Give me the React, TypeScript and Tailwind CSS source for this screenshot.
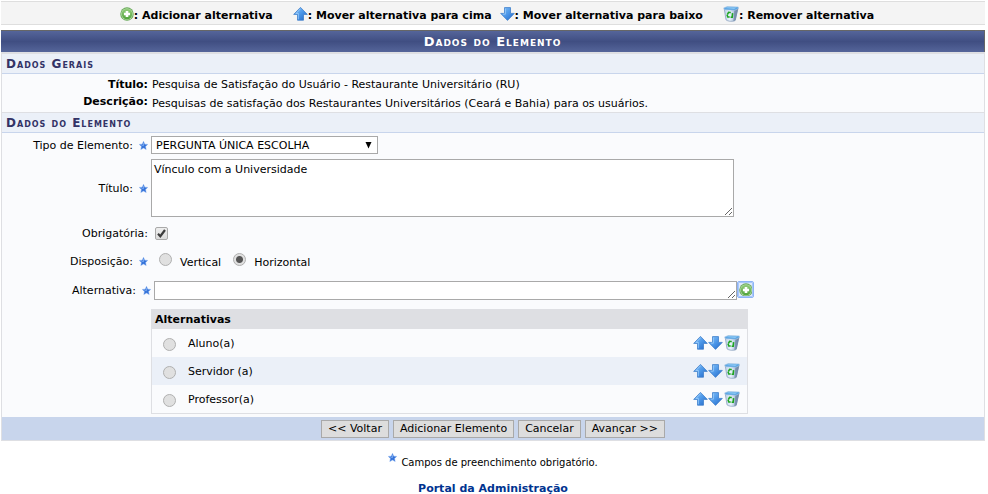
import { useState } from 'react';
import type { ReactNode } from 'react';

const initialAlternatives = ['Aluno(a)', 'Servidor (a)', 'Professor(a)'];

function AddIcon() {
    return (
        <svg width="14" height="14" viewBox="0 0 16 16" aria-hidden="true">
            <defs>
                <linearGradient id="addFill" x1="0" y1="0" x2="0" y2="1">
                    <stop offset="0" stopColor="#93cd7c" />
                    <stop offset="1" stopColor="#52a33c" />
                </linearGradient>
            </defs>
            <circle cx="8" cy="8" r="7.7" fill="#67a957" />
            <circle cx="8" cy="8" r="6.7" fill="#b5dba6" />
            <circle cx="8" cy="8" r="5.9" fill="url(#addFill)" />
            <path d="M6.5 4.5h3v2h2v3h-2v2h-3v-2h-2v-3h2z" fill="#fff" />
        </svg>
    );
}

function ArrowIcon({ down = false }: { down?: boolean }) {
    const fill = down ? 'arrowDown' : 'arrowUp';
    return (
        <svg width="15" height="16" viewBox="0 0 15 16" aria-hidden="true">
            <defs>
                <linearGradient id={fill} x1="0" y1="0" x2="1" y2="1">
                    <stop offset="0" stopColor="#8cc6fa" />
                    <stop offset="0.5" stopColor="#4c97e8" />
                    <stop offset="1" stopColor="#2266c6" />
                </linearGradient>
            </defs>
            <path
                d={
                    down
                        ? 'M4.5 1.6h6v5.8h3.8L7.5 14.4 0.7 7.4h3.8z'
                        : 'M7.5 1.4 14.3 8.4h-3.8v5.8h-6V8.4H0.7z'
                }
                fill={`url(#${fill})`}
                stroke="#3f7fca"
                strokeWidth="0.8"
                strokeLinejoin="round"
            />
            <path
                d={down ? 'M5.4 2.6v5.6H3' : 'M7.5 2.8 3 7.5h2.4v5.8'}
                fill="none"
                stroke="#a3d2fc"
                strokeWidth="0.7"
            />
        </svg>
    );
}

function TrashIcon() {
    return (
        <svg width="16" height="16" viewBox="0 0 16 16" aria-hidden="true">
            <defs>
                <linearGradient id="binBody" x1="0" y1="0" x2="1" y2="0">
                    <stop offset="0" stopColor="#bcd0e8" />
                    <stop offset="0.4" stopColor="#eaf3fd" />
                    <stop offset="0.7" stopColor="#b4c7de" />
                    <stop offset="1" stopColor="#66809f" />
                </linearGradient>
            </defs>
            <path d="M1.2 2.4 3 13.8c1.6 1.6 6.4 2 9 .9L15 2.6z" fill="url(#binBody)" stroke="#8299b8" strokeWidth="0.7" />
            <path d="M11.3 4.5 10.4 15l2.4-1L15 2.8z" fill="#6f87a5" opacity="0.75" />
            <path d="M.7 1.9 4.2.6l11 .3.3 1.5-3.6 1.9-10.4-.5z" fill="#5aa5e4" stroke="#a9c6e2" strokeWidth="0.6" />
            <path d="M2.3 2 4.6 1.2l9 .3-2.4 1.5z" fill="#8cc8f4" />
            <path d="M4.3 8.6 5.6 6.4l2.2.1" fill="none" stroke="#1fa51f" strokeWidth="1.6" />
            <path d="M4 8.8l.8 2.2h1.9" fill="none" stroke="#1fa51f" strokeWidth="1.5" />
            <path d="M7.6 11.2h1.6l.4-4" fill="none" stroke="#1fa51f" strokeWidth="1.6" />
        </svg>
    );
}

function StarIcon() {
    return (
        <svg width="9" height="9" viewBox="0 0 10 10" className="shrink-0" aria-hidden="true">
            <path
                d="M5 .4 6.4 3.5l3.3.3-2.4 2.3.7 3.4L5 7.8 2 9.5l.7-3.4L.3 3.8l3.3-.3z"
                fill="#3573d9"
                stroke="#7eaaf0"
                strokeWidth="0.5"
            />
            <path d="M5 2.2v3L2.4 4.4" fill="none" stroke="#8ab6f8" strokeWidth="0.8" />
        </svg>
    );
}

function LegendItem({ icon, children }: { icon: ReactNode; children: ReactNode }) {
    return (
        <span className="flex items-center">
            {icon}
            <span className="pt-1">: {children}</span>
        </span>
    );
}

function SectionTitle({ children }: { children: ReactNode }) {
    return (
        <h2 className="h-5 border-b border-[#c8d5ec] bg-[#ebf0f8] pl-1 text-[12px] leading-5 font-bold tracking-[1px] text-[#333366] [font-variant:small-caps]">
            {children}
        </h2>
    );
}

function FieldLabel({ id, required = false, children }: { id: string; required?: boolean; children: ReactNode }) {
    return (
        <div className="flex items-center justify-end gap-1.5 pr-[3px]">
            <label htmlFor={id} className="pt-px">{children}</label>
            {required && <StarIcon />}
        </div>
    );
}

const radioClass =
    'size-[13px] shrink-0 appearance-none rounded-full border border-[#b0b0b0] bg-[#e0e0e0] checked:bg-[radial-gradient(circle,#555_3px,#e0e0e0_4px)]';

const buttonClass = 'h-[18px] border border-[#a9a9a9] bg-[#dddddd] px-1.5 leading-4';

export default function App() {
    const [title, setTitle] = useState('Vínculo com a Universidade');
    const [required, setRequired] = useState(true);
    const [layout, setLayout] = useState('horizontal');
    const [alternative, setAlternative] = useState('');
    const [alternatives, setAlternatives] = useState(initialAlternatives);

    const addAlternative = () => {
        if (!alternative.trim()) return;
        setAlternatives([...alternatives, alternative.trim()]);
        setAlternative('');
    };

    const moveAlternative = (from: number, to: number) => {
        if (to < 0 || to >= alternatives.length) return;
        const next = [...alternatives];
        const [item] = next.splice(from, 1);
        next.splice(to, 0, item);
        setAlternatives(next);
    };

    const removeAlternative = (index: number) => {
        setAlternatives(alternatives.filter((_, i) => i !== index));
    };

    return (
        <div className="bg-white pt-px pr-[3px] pb-1 pl-px font-['Verdana','DejaVu_Sans',sans-serif] text-[11px] leading-4 text-black">
            {/* Icon legend */}
            <div className="flex h-6 items-center justify-center border-y border-[#dedede] bg-[#f4f4f4] pt-0.5 pl-2 font-bold">
                <div className="flex gap-5">
                    <LegendItem icon={<AddIcon />}>Adicionar alternativa</LegendItem>
                    <div className="flex gap-2">
                        <LegendItem icon={<ArrowIcon />}>Mover alternativa para cima</LegendItem>
                        <LegendItem icon={<ArrowIcon down />}>Mover alternativa para baixo</LegendItem>
                    </div>
                    <LegendItem icon={<TrashIcon />}>Remover alternativa</LegendItem>
                </div>
            </div>

            <form className="mt-[5px]" onSubmit={(e) => e.preventDefault()}>
                <h1 className="h-[22px] border-t border-r border-[#666666] bg-linear-to-b from-[#55659a] via-[#404e82] to-[#55659a] text-center text-[13px] leading-[22px] font-bold tracking-[1px] text-white [font-variant:small-caps]">
                    Dados do Elemento
                </h1>

                <div className="border-x border-t-2 border-b border-[#dedfe3] bg-[#fafbfd]">
                    {/* General data */}
                    <SectionTitle>Dados Gerais</SectionTitle>
                    <dl className="grid grid-cols-[146px_1fr] gap-x-1 gap-y-px border-b border-[#dedfe3] pt-[3px]">
                        <dt className="text-right font-bold">Título:</dt>
                        <dd>Pesquisa de Satisfação do Usuário - Restaurante Universitário (RU)</dd>
                        <dt className="text-right font-bold">Descrição:</dt>
                        <dd className="pt-0.5">Pesquisas de satisfação dos Restaurantes Universitários (Ceará e Bahia) para os usuários.</dd>
                    </dl>

                    {/* Element data */}
                    <SectionTitle>Dados do Elemento</SectionTitle>
                    <div className="py-[3px]">
                        <div className="grid grid-cols-[149px_1fr]">
                            <FieldLabel id="tipo" required>Tipo de Elemento:</FieldLabel>
                            <div className="grid w-[227px]">
                                <select id="tipo" className="col-start-1 row-start-1 h-[18px] appearance-none border border-[#a9a9a9] bg-white pt-px pl-1 leading-4">
                                    <option>PERGUNTA ÚNICA ESCOLHA</option>
                                </select>
                                <svg width="7" height="7" viewBox="0 0 7 7" className="pointer-events-none col-start-1 row-start-1 mr-1.5 self-center justify-self-end" aria-hidden="true">
                                    <path d="M.5 0h6L3.5 6.5z" fill="#000" />
                                </svg>
                            </div>
                        </div>

                        <div className="mt-[5px] grid grid-cols-[149px_1fr]">
                            <FieldLabel id="titulo" required>Título:</FieldLabel>
                            <textarea
                                id="titulo"
                                value={title}
                                onChange={(e) => setTitle(e.target.value)}
                                className="h-[58px] w-[583px] max-w-full resize border border-[#a9a9a9] bg-white px-0.5 py-0.5"
                            />
                        </div>

                        <div className="mt-1.5 grid h-5 grid-cols-[149px_1fr] items-center">
                            <FieldLabel id="obrigatoria">Obrigatória:</FieldLabel>
                            <div className="ml-1 grid w-[13px]">
                                <input
                                    id="obrigatoria"
                                    type="checkbox"
                                    checked={required}
                                    onChange={(e) => setRequired(e.target.checked)}
                                    className="col-start-1 row-start-1 size-[13px] appearance-none rounded-xs border border-[#a9a9a9] bg-linear-to-b from-[#eeeeee] to-[#dcdcdc]"
                                />
                                {required && (
                                    <svg width="13" height="13" viewBox="0 0 13 13" className="pointer-events-none col-start-1 row-start-1" aria-hidden="true">
                                        <path d="M3 6.8 5.3 9.2 10 3" fill="none" stroke="#3c3c3c" strokeWidth="2.2" />
                                    </svg>
                                )}
                            </div>
                        </div>

                        <div className="mt-2 grid h-5 grid-cols-[149px_1fr] items-center">
                            <FieldLabel id="vertical" required>Disposição:</FieldLabel>
                            <div className="flex gap-3 pt-px pl-2">
                                <span className="flex items-start gap-2">
                                    <input
                                        id="vertical"
                                        type="radio"
                                        name="disposicao"
                                        checked={layout === 'vertical'}
                                        onChange={() => setLayout('vertical')}
                                        className={radioClass}
                                    />
                                    <label htmlFor="vertical" className="pt-0.5">Vertical</label>
                                </span>
                                <span className="flex items-start gap-2">
                                    <input
                                        id="horizontal"
                                        type="radio"
                                        name="disposicao"
                                        checked={layout === 'horizontal'}
                                        onChange={() => setLayout('horizontal')}
                                        className={radioClass}
                                    />
                                    <label htmlFor="horizontal" className="pt-0.5">Horizontal</label>
                                </span>
                            </div>
                        </div>

                        <div className="mt-2.5 grid grid-cols-[152px_1fr]">
                            <FieldLabel id="alternativa" required>Alternativa:</FieldLabel>
                            <div className="flex items-start">
                                <textarea
                                    id="alternativa"
                                    value={alternative}
                                    onChange={(e) => setAlternative(e.target.value)}
                                    className="h-[19px] w-[583px] resize overflow-hidden border border-[#a9a9a9] bg-white px-0.5"
                                />
                                <button
                                    type="button"
                                    aria-label="Adicionar alternativa"
                                    onClick={addAlternative}
                                    className="flex size-[17px] items-center justify-center rounded-xs border border-[#8db4f5] bg-[#dfeafc] outline-1 -outline-offset-2 outline-[#a9c8fb]"
                                >
                                    <AddIcon />
                                </button>
                            </div>
                        </div>

                        {/* Alternatives list */}
                        <div className="mt-[9px] pl-[149px]">
                            <table className="w-[597px] max-w-full border-separate border-spacing-0 border-x border-b border-[#dedfe3]">
                                <thead>
                                    <tr className="h-5 bg-[#dedfe3]">
                                        <th colSpan={3} className="pt-0.5 pl-[3px] text-left">Alternativas</th>
                                    </tr>
                                </thead>
                                <tbody>
                                    {alternatives.map((item, index) => (
                                        <tr key={item} className="h-7 even:bg-[#ebf0f8]">
                                            <td className="w-9 pt-0.5 pl-[11px]">
                                                <input id={`alt-${index}`} type="radio" name="alternativas" className={`${radioClass} block`} />
                                            </td>
                                            <td className="pt-px"><label htmlFor={`alt-${index}`}>{item}</label></td>
                                            <td className="pr-[7px]">
                                                <div className="flex justify-end">
                                                    <button type="button" aria-label="Mover alternativa para cima" onClick={() => moveAlternative(index, index - 1)}>
                                                        <ArrowIcon />
                                                    </button>
                                                    <button type="button" aria-label="Mover alternativa para baixo" onClick={() => moveAlternative(index, index + 1)}>
                                                        <ArrowIcon down />
                                                    </button>
                                                    <button type="button" aria-label="Remover alternativa" className="ml-px" onClick={() => removeAlternative(index)}>
                                                        <TrashIcon />
                                                    </button>
                                                </div>
                                            </td>
                                        </tr>
                                    ))}
                                </tbody>
                            </table>
                        </div>
                    </div>

                    {/* Form actions */}
                    <div className="flex items-center justify-center gap-1 bg-[#c8d5ec] pt-[3px] pb-0.5">
                        <button type="button" className={buttonClass}>&lt;&lt; Voltar</button>
                        <button type="submit" className={buttonClass}>Adicionar Elemento</button>
                        <button type="button" className={buttonClass}>Cancelar</button>
                        <button type="button" className={buttonClass}>Avançar &gt;&gt;</button>
                    </div>
                </div>
            </form>

            <p className="mt-3 flex items-start justify-center gap-1 text-[10px]">
                <StarIcon />
                <span className="pt-0.5">Campos de preenchimento obrigatório.</span>
            </p>
            <p className="mt-2.5 text-center font-bold">
                <a href="#portal" className="text-[#003390] hover:underline">Portal da Administração</a>
            </p>
        </div>
    );
}
